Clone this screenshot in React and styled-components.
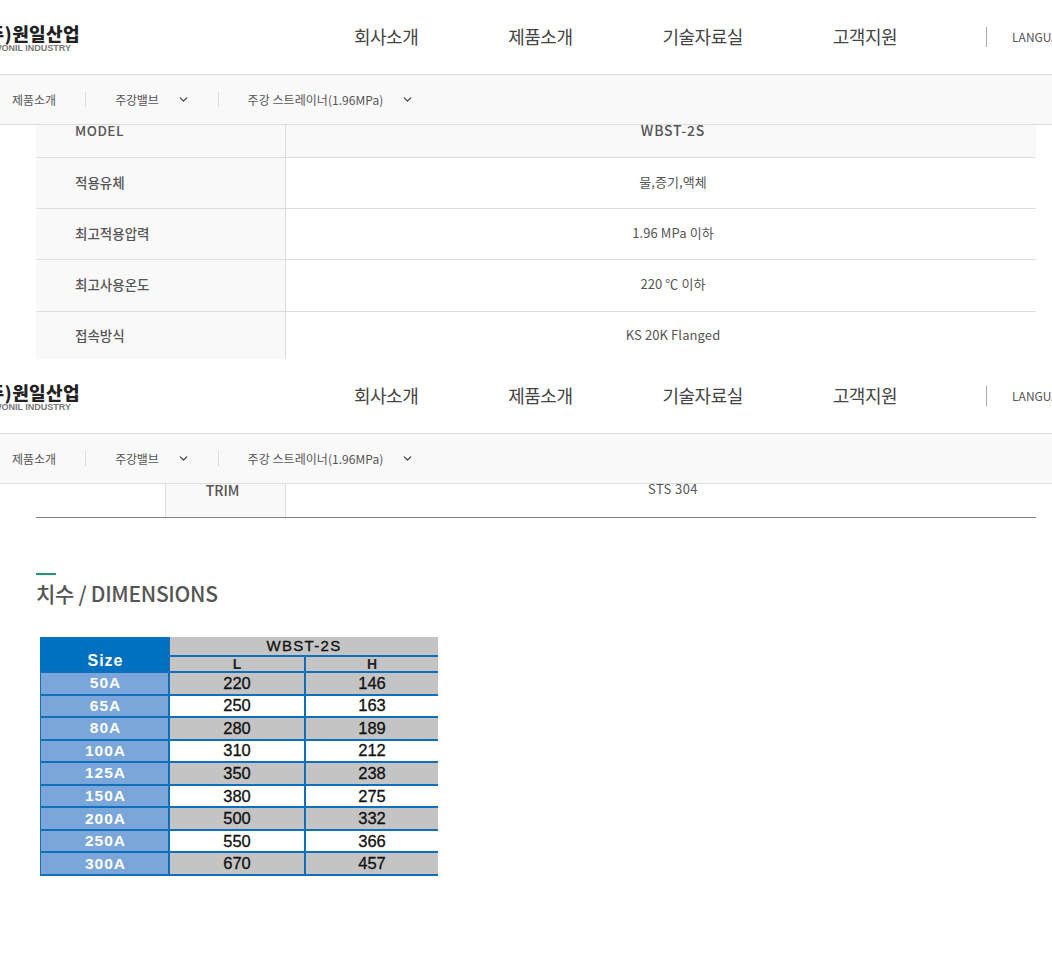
import React from "react";
import styled, { createGlobalStyle } from "styled-components";
import { FiChevronDown } from "react-icons/fi";

const GlobalStyle = createGlobalStyle`
  html, body {
    margin: 0;
    padding: 0;
    background: #fff;
    overflow: hidden;
  }
  body {
    font-family: "Noto Sans CJK KR", "Noto Sans", sans-serif;
    color: #555;
  }
`;

const Screen = styled.section`
  height: ${(p) => p.$height}px;
  overflow: hidden;
  display: flex;
  flex-direction: column;
`;

const Header = styled.header`
  flex: none;
  height: 74px;
  display: flex;
  align-items: center;
  border-bottom: 1px solid #ddd;
  overflow: hidden;
  box-sizing: content-box;
`;

const Logo = styled.div`
  flex: none;
  width: 80px;
  height: 28px;
  margin-top: 1px;
  display: flex;
  flex-direction: column;
  align-items: flex-end;
  overflow: hidden;
`;

const LogoTitle = styled.span`
  flex: none;
  font-size: 18px;
  line-height: 18px;
  font-weight: 900;
  color: #222;
  white-space: nowrap;
  letter-spacing: 0.4px;
`;

const LogoSub = styled.span`
  flex: none;
  font-family: "Liberation Sans", sans-serif;
  font-size: 9px;
  line-height: 10px;
  font-weight: 700;
  color: #777;
  white-space: nowrap;
  margin: 1px 9px 0 0;
`;

const MainNav = styled.nav`
  display: flex;
  gap: 90px;
  margin: -2px 0 0 274px;
`;

const NavItem = styled.a`
  font-size: 18px;
  color: #444;
  letter-spacing: -0.5px;
  white-space: nowrap;
`;

const Language = styled.div`
  flex: none;
  margin-left: 89px;
  padding-left: 25px;
  height: 20px;
  line-height: 20px;
  border-left: 1px solid #aaa;
  font-size: 12px;
  color: #555;
  white-space: nowrap;
`;

const SubNav = styled.div`
  flex: none;
  height: 49px;
  display: flex;
  align-items: center;
  background: #f9f9f9;
  border-bottom: 1px solid #ddd;
  box-sizing: content-box;
`;

const Crumb = styled.div`
  display: flex;
  align-items: center;
  height: 15px;
  line-height: 13px;
  font-size: 12px;
  color: #555;
  white-space: nowrap;
  letter-spacing: ${(p) => p.$spacing || 0}px;
  padding: 0 ${(p) => p.$right}px 0 ${(p) => p.$left}px;
  & + & {
    border-left: 1px solid #ddd;
  }
  svg {
    margin-left: 18px;
    color: #333;
  }
`;

const SpecTable = styled.div`
  width: 1000px;
  margin-left: 36px;
  border-bottom: ${(p) => (p.$closed ? "1px solid #808080" : "none")};
`;

const SpecRow = styled.div`
  display: grid;
  grid-template-columns: 250px 1fr;
  height: ${(p) => p.$height}px;
  box-sizing: border-box;
  border-bottom: ${(p) => (p.$last ? "none" : "1px solid #ddd")};
  background: ${(p) => (p.$head ? "#f9f9f9" : "#fff")};
`;

const SplitRow = styled.div`
  display: grid;
  grid-template-columns: 130px 120px 1fr;
  height: 33px;
`;

const LabelCell = styled.div`
  display: flex;
  align-items: ${(p) => (p.$top ? "flex-start" : "center")};
  padding: 0 0 ${(p) => (p.$top ? 0 : 3)}px 39px;
  line-height: ${(p) => (p.$top ? "10px" : "14px")};
  background: #f9f9f9;
  border-right: 1px solid #ddd;
  font-size: 13.5px;
  font-weight: 500;
  color: #555;
  letter-spacing: ${(p) => (p.$top ? "0.5px" : "0")};
`;

const BlankCell = styled.div`
  background: #fff;
  border-right: 1px solid #ddd;
`;

const TrimCell = styled.div`
  background: #f9f9f9;
  border-right: 1px solid #ddd;
  text-align: center;
  font-size: 14px;
  font-weight: 500;
  line-height: 12px;
  padding-right: 6px;
  color: #555;
`;

const ValueCell = styled.div`
  display: flex;
  justify-content: center;
  align-items: ${(p) => (p.$top ? "flex-start" : "center")};
  padding: 0 0 ${(p) => (p.$top ? 0 : 4)}px 24px;
  font-size: ${(p) => (p.$strong ? 14 : 13)}px;
  font-weight: ${(p) => (p.$strong ? 500 : 400)};
  color: #555;
  letter-spacing: ${(p) => (p.$strong ? "0.8px" : p.$top ? "0.4px" : "0.1px")};
  line-height: ${(p) => (p.$top ? "10px" : "13px")};
`;

const Dimensions = styled.div`
  margin: 55px 0 0 36px;
`;

const SectionTitle = styled.h3`
  margin: 0;
  padding-top: 2px;
  font-size: 21px;
  line-height: 36px;
  font-weight: 500;
  color: #555;
  letter-spacing: -0.3px;
  position: relative;
  &::before {
    content: "";
    position: absolute;
    top: 0;
    left: 0;
    width: 20px;
    height: 2px;
    background: #1f9a6b;
  }
`;

const DimGrid = styled.div`
  margin: 26px 0 0 4px;
  width: 398px;
  height: 239px;
  box-sizing: border-box;
  padding: 0 0 2px 1px;
  background: #0f6fba;
  display: grid;
  grid-template-columns: 127px 134px 132px;
  grid-template-rows: 18px 14px repeat(9, 1fr);
  gap: 2px;
  font-family: "Liberation Sans", Arial, sans-serif;
`;

const SizeHead = styled.div`
  grid-row: 1 / span 2;
  margin: 0 0 0 -1px;
  padding: 0 0 1px 3px;
  background: #0070c0;
  color: #fff;
  font-size: 16px;
  font-weight: 700;
  letter-spacing: 1px;
  display: flex;
  align-items: flex-end;
  justify-content: center;
`;

const ModelHead = styled.div`
  grid-column: 2 / span 2;
  background: #c4c4c4;
  color: #111;
  font-size: 15px;
  letter-spacing: 1.3px;
  line-height: 18px;
  text-align: center;
  -webkit-text-stroke: 0.3px #111;
`;

const ColHead = styled.div`
  background: #c4c4c4;
  color: #222;
  font-size: 14px;
  font-weight: 700;
  line-height: 15px;
  text-align: center;
`;

const SizeCell = styled.div`
  background: #7ba6d9;
  color: #fff;
  font-size: 15.5px;
  font-weight: 700;
  letter-spacing: 1px;
  padding-left: 2px;
  display: flex;
  align-items: center;
  justify-content: center;
`;

const NumCell = styled.div`
  background: ${(p) => (p.$shaded ? "#c4c4c4" : "#fff")};
  color: #111;
  font-size: 16.5px;
  -webkit-text-stroke: 0.3px #111;
  display: flex;
  align-items: center;
  justify-content: center;
`;

const navItems = ["회사소개", "제품소개", "기술자료실", "고객지원"];

const specs = [
  ["적용유체", "물,증기,액체", 51],
  ["최고적용압력", "1.96 MPa 이하", 51],
  ["최고사용온도", "220 ℃ 이하", 52],
];

const sizes = [
  ["50A", 220, 146],
  ["65A", 250, 163],
  ["80A", 280, 189],
  ["100A", 310, 212],
  ["125A", 350, 238],
  ["150A", 380, 275],
  ["200A", 500, 332],
  ["250A", 550, 366],
  ["300A", 670, 457],
];

function Top() {
  return (
    <>
      <Header>
        <Logo>
          <LogoTitle>(주)원일산업</LogoTitle>
          <LogoSub>WONIL INDUSTRY</LogoSub>
        </Logo>
        <MainNav>
          {navItems.map((item) => (
            <NavItem key={item}>{item}</NavItem>
          ))}
        </MainNav>
        <Language>LANGUAGE</Language>
      </Header>
      <SubNav>
        <Crumb $left={12} $right={29}>제품소개</Crumb>
        <Crumb $left={29} $right={28} $spacing={-0.2}>
          주강밸브
          <FiChevronDown size={13} />
        </Crumb>
        <Crumb $left={29} $right={0} $spacing={0.05}>
          주강 스트레이너(1.96MPa)
          <FiChevronDown size={13} />
        </Crumb>
      </SubNav>
    </>
  );
}

export default function App() {
  return (
    <>
      <GlobalStyle />
      <Screen $height={359}>
        <Top />
        <SpecTable>
          <SpecRow $head $height={33}>
            <LabelCell $top>MODEL</LabelCell>
            <ValueCell $top $strong>WBST-2S</ValueCell>
          </SpecRow>
          {specs.map(([label, value, height]) => (
            <SpecRow key={label} $height={height}>
              <LabelCell>{label}</LabelCell>
              <ValueCell>{value}</ValueCell>
            </SpecRow>
          ))}
          <SpecRow $last $height={48}>
            <LabelCell>접속방식</LabelCell>
            <ValueCell>KS 20K Flanged</ValueCell>
          </SpecRow>
        </SpecTable>
      </Screen>
      <Screen $height={598}>
        <Top />
        <SpecTable $closed>
          <SplitRow>
            <BlankCell />
            <TrimCell>TRIM</TrimCell>
            <ValueCell $top>STS 304</ValueCell>
          </SplitRow>
        </SpecTable>
        <Dimensions>
          <SectionTitle>치수 / DIMENSIONS</SectionTitle>
          <DimGrid>
            <SizeHead>Size</SizeHead>
            <ModelHead>WBST-2S</ModelHead>
            <ColHead>L</ColHead>
            <ColHead>H</ColHead>
            {sizes.map(([size, l, h], i) => (
              <React.Fragment key={size}>
                <SizeCell>{size}</SizeCell>
                <NumCell $shaded={i % 2 === 0}>{l}</NumCell>
                <NumCell $shaded={i % 2 === 0}>{h}</NumCell>
              </React.Fragment>
            ))}
          </DimGrid>
        </Dimensions>
      </Screen>
    </>
  );
}
